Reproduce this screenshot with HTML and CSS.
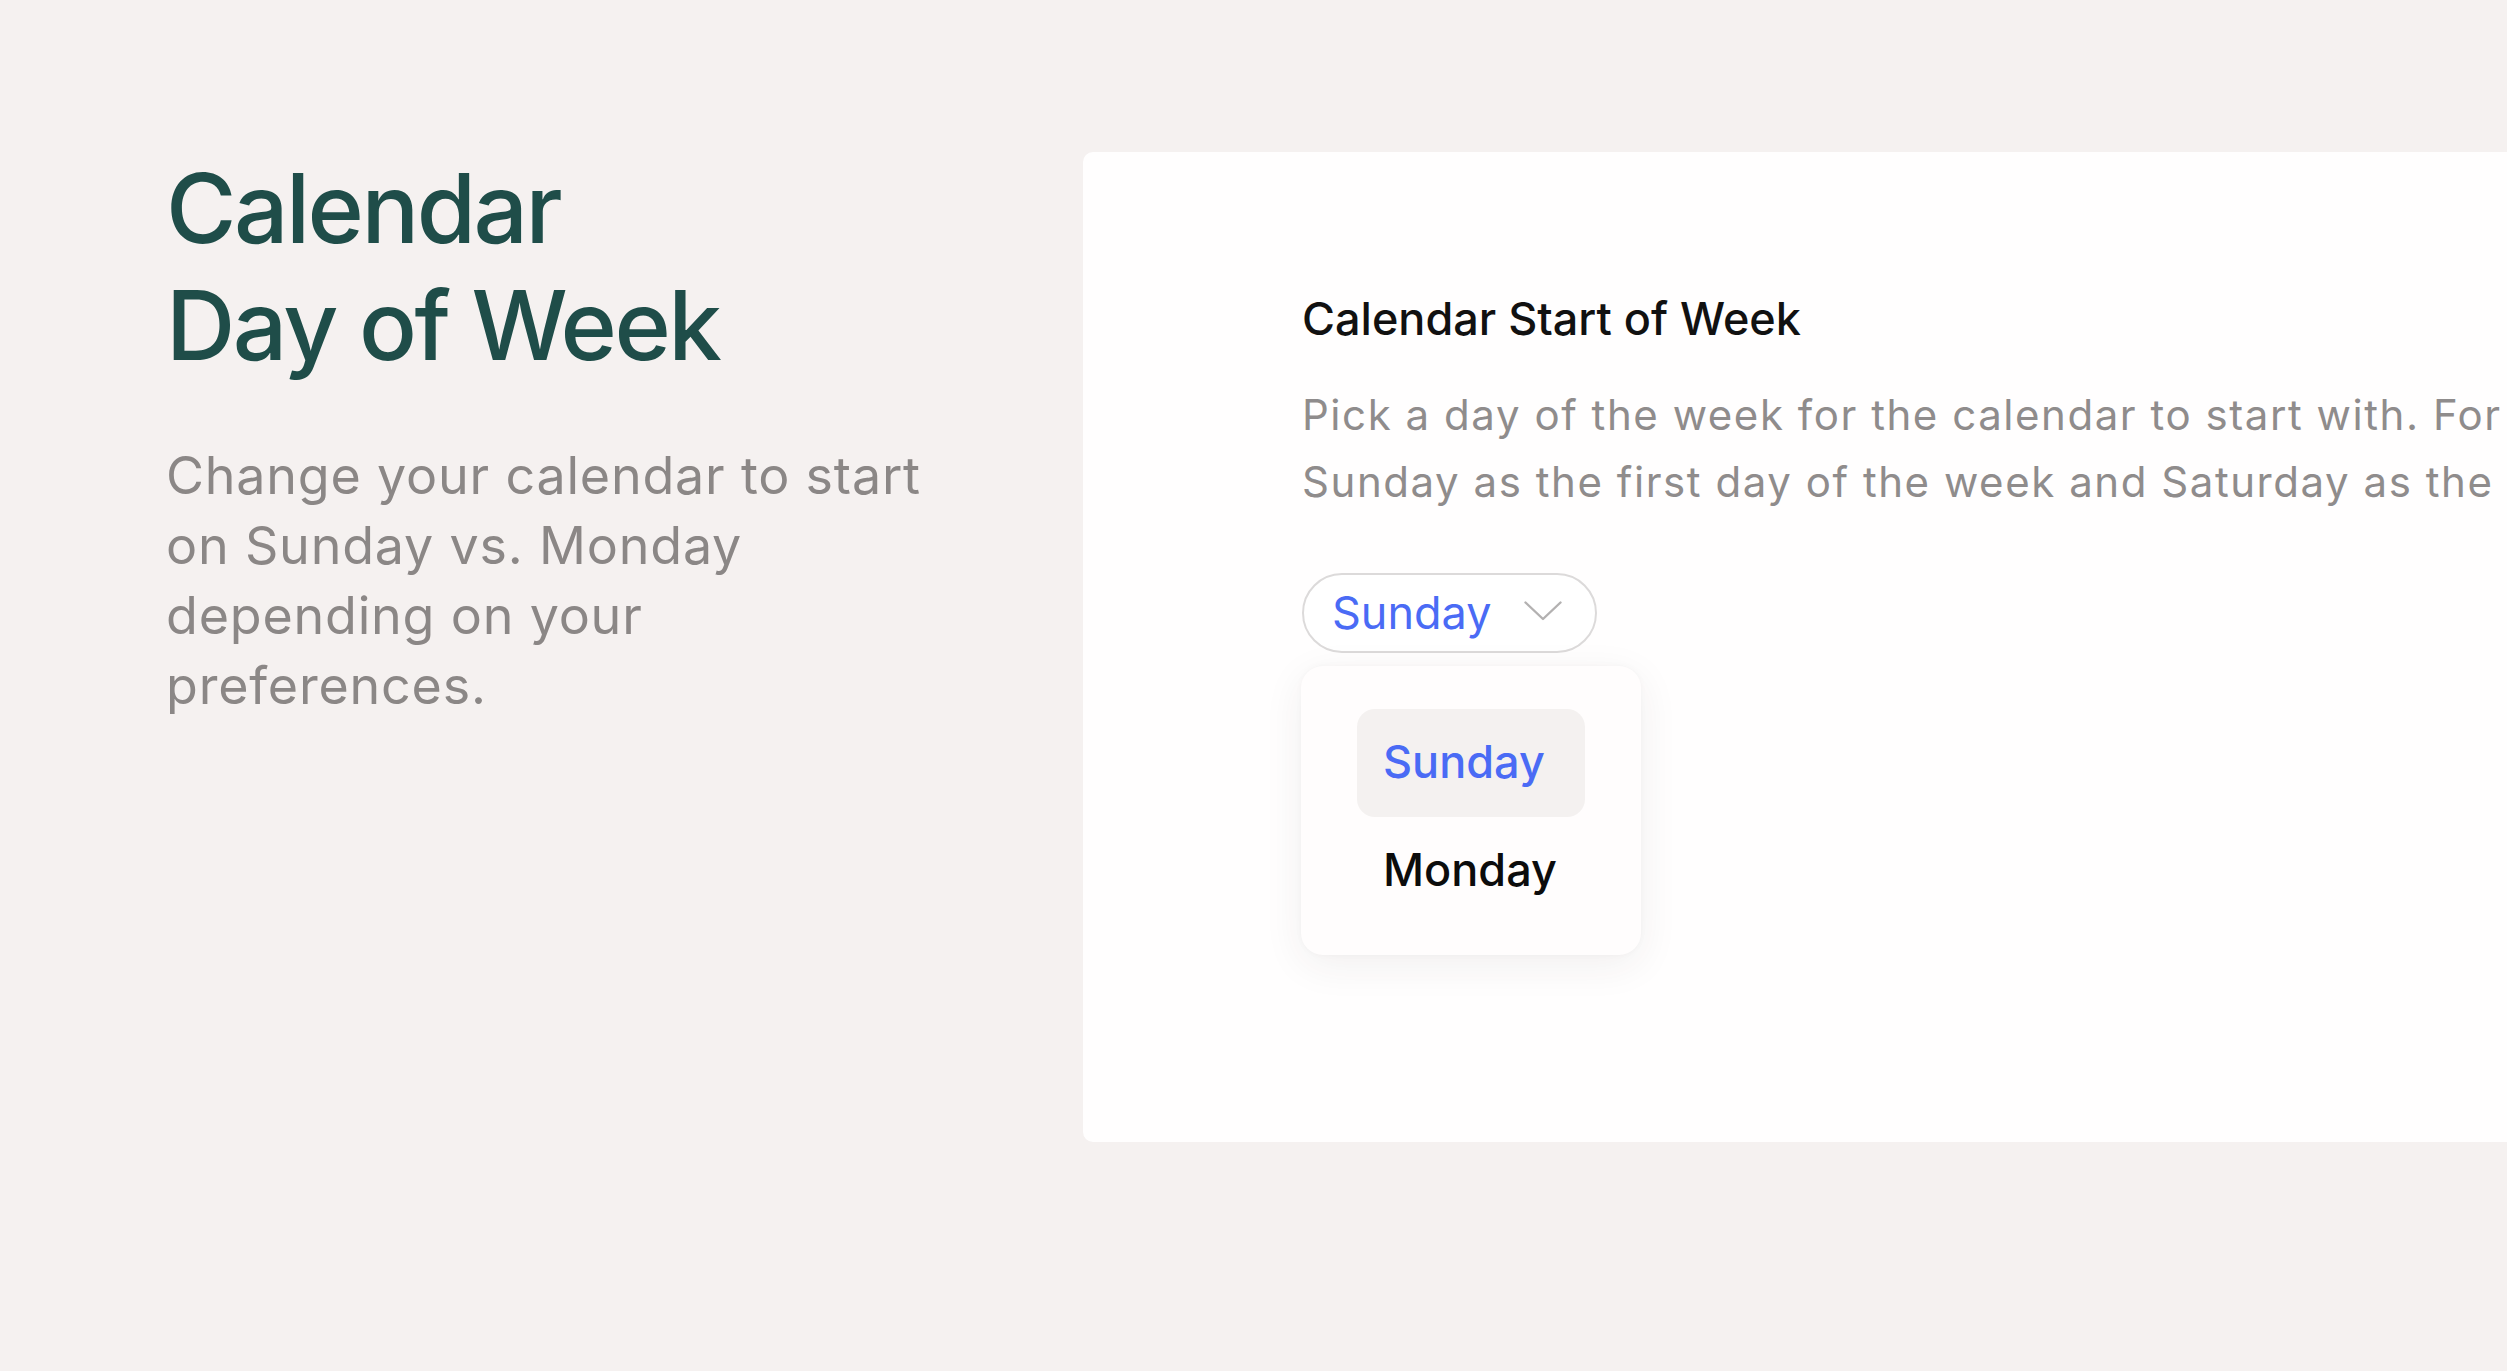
FILE: index.html
```
<!DOCTYPE html>
<html lang="en">
<head>
<meta charset="utf-8">
<title>Calendar Day of Week</title>
<link rel="stylesheet" href="styles.css">
</head>
<body>
<main class="page">
  <section class="intro">
    <h1 class="intro-title">Calendar<br>Day of Week</h1>
    <p class="intro-text">Change your calendar to start on Sunday vs. Monday depending on your preferences.</p>
  </section>
  <section class="card">
    <h2 class="card-title">Calendar Start of Week</h2>
    <p class="card-desc">Pick a day of the week for the calendar to start with. For example, a US calendar shows<br>Sunday as the first day of the week and Saturday as the last day of the week.</p>
    <div class="dropdown">
      <button class="select" type="button">
        <span class="select-value">Sunday</span>
        <svg class="chevron" width="38" height="20" viewBox="0 0 38 20" aria-hidden="true"><path d="M1.5 1.5 L19 18 L36.5 1.5" fill="none" stroke="#b3b1b1" stroke-width="2.4" stroke-linecap="round" stroke-linejoin="round"/></svg>
      </button>
      <ul class="menu">
        <li class="menu-item is-selected">Sunday</li>
        <li class="menu-item">Monday</li>
      </ul>
    </div>
  </section>
</main>
</body>
</html>
```
FILE: styles.css
```
html, body {
  margin: 0;
  padding: 0;
  background: #f5f1f0;
  overflow: hidden;
  width: 2507px;
  height: 1371px;
}

body {
  font-family: Inter, "Noto Sans", sans-serif;
}

.page {
  display: flex;
  align-items: flex-start;
  padding-top: 150px;
}

.intro {
  flex: 0 0 1083px;
  box-sizing: border-box;
  padding-left: 166px;
}

.intro-title {
  margin: 0;
  font-size: 96px;
  line-height: 117px;
  font-weight: 500;
  color: #1f4d49;
  letter-spacing: -2.5px;
}

.intro-text {
  margin: 57px 0 0;
  width: 790px;
  font-size: 52px;
  line-height: 70px;
  font-weight: 400;
  letter-spacing: 0.8px;
  color: #8b8786;
}

.card {
  flex: 0 0 1700px;
  box-sizing: border-box;
  height: 990px;
  margin-top: 2px;
  background: #fffefe;
  border-radius: 10px;
  padding: 140px 0 0 219px;
}

.card-title {
  margin: 0;
  font-size: 45px;
  line-height: 54px;
  font-weight: 500;
  color: #111111;
}

.card-desc {
  margin: 35px 0 0;
  font-size: 42px;
  line-height: 67px;
  font-weight: 400;
  letter-spacing: 1.55px;
  color: #8f8c8c;
  white-space: nowrap;
}

.dropdown {
  position: relative;
  margin-top: 58px;
  width: 340px;
}

.select {
  display: flex;
  align-items: center;
  gap: 32px;
  box-sizing: border-box;
  height: 80px;
  padding: 0 33px 0 28px;
  border: 2px solid #dcdada;
  border-radius: 40px;
  background: #ffffff;
  font-family: inherit;
  font-size: 45px;
  font-weight: 400;
  color: #4a6bf5;
  cursor: pointer;
}

.select-value {
  line-height: 54px;
}

.chevron {
  display: block;
  margin-top: -4px;
}

.menu {
  position: absolute;
  top: 93px;
  left: -1px;
  width: 340px;
  box-sizing: border-box;
  margin: 0;
  padding: 43px 56px 30px;
  list-style: none;
  background: #fffdfd;
  border-radius: 22px;
  box-shadow: 0 10px 40px rgba(60, 40, 40, 0.07), 0 0 6px rgba(60, 40, 40, 0.03);
}

.menu-item {
  display: flex;
  align-items: center;
  box-sizing: border-box;
  height: 108px;
  padding: 0 0 3px 26px;
  border-radius: 18px;
  font-size: 45px;
  font-weight: 500;
  color: #0c0c0c;
}

.menu-item.is-selected {
  background: #f4f1f0;
  color: #4a6bf5;
}
```
